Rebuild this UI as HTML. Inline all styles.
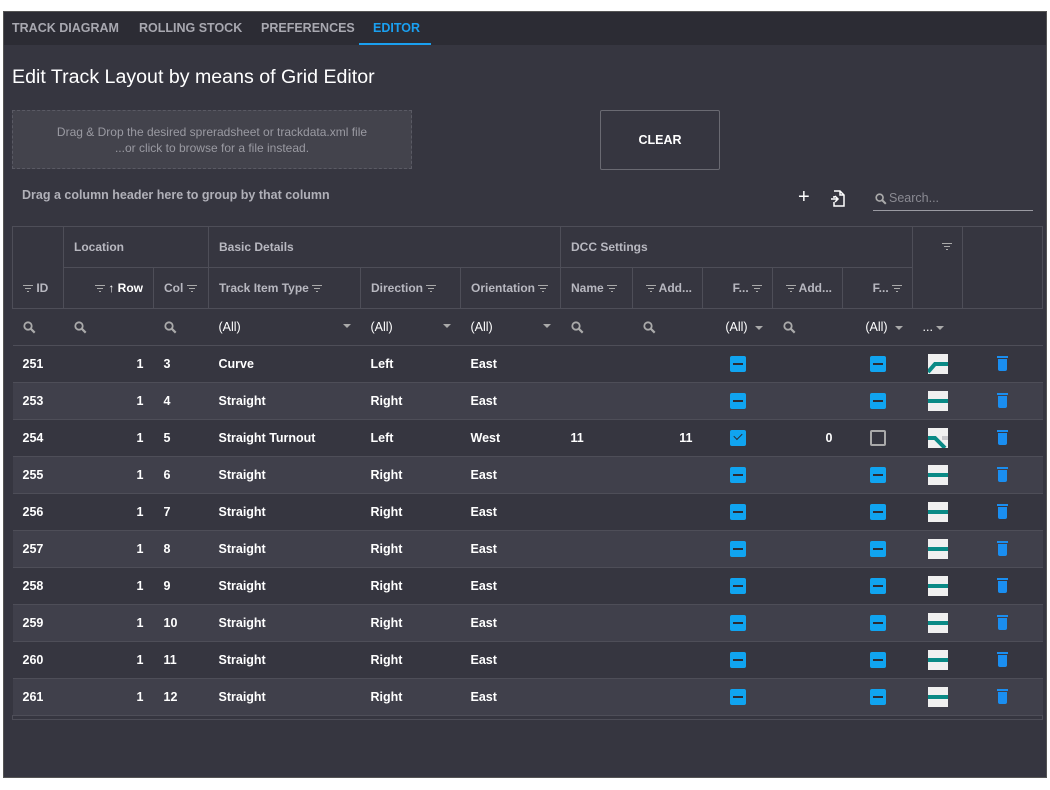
<!DOCTYPE html>
<html><head><meta charset="utf-8"><style>
*{box-sizing:border-box;margin:0;padding:0}
body{width:1050px;height:790px;background:#fff;font-family:"Liberation Sans",sans-serif;position:relative;overflow:hidden}
#app{position:absolute;left:3px;top:11px;width:1044px;height:767px;background:#363640;border:1px solid #555}
#nav{height:33px;background:#2c2c34;position:relative}
.tab{position:absolute;top:9px;font-size:12.5px;font-weight:bold;color:#a8a8b0}
.tab.act{color:#1aa0f0}
#ul{position:absolute;left:355px;top:31px;width:72px;height:2px;background:#1aa0f0}
h1{position:absolute;left:8px;top:54px;font-size:19.6px;font-weight:normal;color:#fff}
#drop{position:absolute;left:8px;top:98px;width:400px;height:59px;border:1px dashed #5a5a64;background:#43434c;color:#9a9aa2;font-size:12px;text-align:center;padding-top:13px;line-height:16px}
#clear{position:absolute;left:596px;top:98px;width:120px;height:60px;border:1px solid #6a6a72;border-radius:2px;color:#fff;font-weight:bold;font-size:12.5px;text-align:center;line-height:58px}
#grp{position:absolute;left:18px;top:176px;font-size:12.5px;font-weight:bold;color:#b0b0b8}
#srch{position:absolute;left:869px;top:176px;width:160px;height:23px;border-bottom:1px solid #9a9aa2;color:#8a8a92;font-size:12.5px;padding-left:16px;padding-top:3px}
table{position:absolute;left:8px;top:214px;border-collapse:collapse;table-layout:fixed;font-size:12.5px;color:#fff}
td,th{border:1px solid #4e4e58;padding:0 10px;white-space:nowrap;overflow:hidden;text-align:left}
th{color:#b8b8c0;font-weight:bold;font-size:12px}
.g th{height:41px}
.h th{height:41px}
.f td{height:37px;color:#fff;border-left:none;border-right:none}
.d td{height:37px;border-left:none;border-right:none;font-weight:bold}
.d.alt td{background:#40404b}
.r{text-align:right}
.c{text-align:center}
.fl{display:inline-block;width:10px;height:8px;vertical-align:middle;background:linear-gradient(#aaa,#aaa) 0 0/10px 1px no-repeat,linear-gradient(#aaa,#aaa) 2px 3px/6px 1px no-repeat,linear-gradient(#aaa,#aaa) 4px 6px/2px 1px no-repeat}
.cb{display:inline-block;width:16px;height:16px;background:#10a4f0;border-radius:2px;position:relative;vertical-align:middle}
.cb::after{content:"";position:absolute;left:3px;top:7px;width:10px;height:2px;background:#2c2c34}
.cb.chk::after{left:4px;top:3px;width:7px;height:4px;background:none;border-left:1.5px solid #2c2c34;border-bottom:1.5px solid #2c2c34;transform:rotate(-45deg)}
.cb.no{background:none;border:2px solid #aaa}.cb.no::after{display:none}
.tr{display:inline-block;width:20px;height:20px;background:#f0f0f0;vertical-align:middle;position:relative}
.st::after{content:"";position:absolute;left:0;top:8px;width:20px;height:4px;background:#0a8a86}
.dl{display:inline-block;width:9px;height:12px;background:#1a8ef0;border-radius:0 0 2px 2px;vertical-align:middle;position:relative}
.dl::before{content:"";position:absolute;left:-1px;top:-3px;width:11px;height:2px;background:#1a8ef0}
.mg{display:inline-block;width:13px;height:13px;vertical-align:middle}
.dd{display:inline-block;border:4px solid transparent;border-top-color:#aaa;vertical-align:middle;margin-top:4px;float:right}
</style></head><body>
<svg width="0" height="0" style="position:absolute"><defs><symbol id="m" viewBox="0 0 13 13"><circle cx="5" cy="5" r="3.7" fill="none" stroke="#aaa" stroke-width="1.8"/><path d="M7.7 7.7l4 4" stroke="#aaa" stroke-width="2.2"/></symbol></defs></svg>
<div id="app">
<div id="nav"><span class="tab" style="left:8px">TRACK DIAGRAM</span><span class="tab" style="left:135px">ROLLING STOCK</span><span class="tab" style="left:257px">PREFERENCES</span><span class="tab act" style="left:369px">EDITOR</span><div id="ul"></div></div>
<h1>Edit Track Layout by means of Grid Editor</h1>
<div id="drop">Drag &amp; Drop the desired spreradsheet or trackdata.xml file<br>...or click to browse for a file instead.</div>
<div id="clear">CLEAR</div>
<div id="grp">Drag a column header here to group by that column</div>
<div style="position:absolute;left:794px;top:174px;color:#fff;font-size:20px">+</div>
<svg style="position:absolute;left:826px;top:178px" width="16" height="17" viewBox="0 0 16 17"><path d="M4 1h6l4 4v11H4v-4M10 1v4h4M4 6v2M1 9h7M5 6l3 3-3 3" fill="none" stroke="#fff" stroke-width="1.5"/></svg>
<div id="srch">Search...<svg style="position:absolute;left:2px;top:5px" width="12" height="12"><use href="#m"/></svg></div>
<table>
<colgroup><col style="width:51px"><col style="width:90px"><col style="width:55px"><col style="width:152px"><col style="width:100px"><col style="width:100px"><col style="width:72px"><col style="width:70px"><col style="width:70px"><col style="width:70px"><col style="width:70px"><col style="width:50px"><col style="width:80px"></colgroup>
<tr class="g"><th rowspan="2" style="vertical-align:bottom;padding-bottom:13px"><span class="fl"></span> ID</th><th colspan="2">Location</th><th colspan="3">Basic Details</th><th colspan="5">DCC Settings</th><th rowspan="2" class="r" style="vertical-align:top;padding-top:12px"><span class="fl"></span></th><th rowspan="2"></th></tr>
<tr class="h"><th class="r"><span class="fl"></span> <span style="color:#fff">↑ Row</span></th><th>Col <span class="fl"></span></th><th>Track Item Type <span class="fl"></span></th><th>Direction <span class="fl"></span></th><th>Orientation <span class="fl"></span></th><th>Name <span class="fl"></span></th><th class="r"><span class="fl"></span> Add...</th><th class="r">F... <span class="fl"></span></th><th class="r"><span class="fl"></span> Add...</th><th class="r">F... <span class="fl"></span></th></tr>
<tr class="f"><td><svg class="mg"><use href="#m"/></svg></td><td><svg class="mg"><use href="#m"/></svg></td><td><svg class="mg"><use href="#m"/></svg></td><td>(All)<span class="dd"></span></td><td>(All)<span class="dd"></span></td><td>(All)<span class="dd"></span></td><td><svg class="mg"><use href="#m"/></svg></td><td><svg class="mg"><use href="#m"/></svg></td><td class="r">(All) &nbsp;<span class="dd" style="float:none"></span></td><td><svg class="mg"><use href="#m"/></svg></td><td class="r">(All) &nbsp;<span class="dd" style="float:none"></span></td><td>... <span class="dd" style="float:none"></span></td><td></td></tr>
<tr class="d"><td>251</td><td class="r">1</td><td>3</td><td>Curve</td><td>Left</td><td>East</td><td></td><td></td><td class="c"><span class="cb"></span></td><td></td><td class="c"><span class="cb"></span></td><td class="c"><svg class="tr" width="20" height="20"><rect width="20" height="20" fill="#f0f0f0"/><path d="M0 18l7-8h13" fill="none" stroke="#0a8a86" stroke-width="4"/></svg></td><td class="c"><span class="dl"></span></td></tr>
<tr class="d alt"><td>253</td><td class="r">1</td><td>4</td><td>Straight</td><td>Right</td><td>East</td><td></td><td></td><td class="c"><span class="cb"></span></td><td></td><td class="c"><span class="cb"></span></td><td class="c"><span class="tr st"></span></td><td class="c"><span class="dl"></span></td></tr>
<tr class="d"><td>254</td><td class="r">1</td><td>5</td><td>Straight Turnout</td><td>Left</td><td>West</td><td>11</td><td class="r">11</td><td class="c"><span class="cb chk"></span></td><td class="r">0</td><td class="c"><span class="cb no"></span></td><td class="c"><svg class="tr" width="20" height="20"><rect width="20" height="20" fill="#f0f0f0"/><path d="M14 10h6" stroke="#c8c8cc" stroke-width="4"/><path d="M0 10h7l10 10" fill="none" stroke="#0a8a86" stroke-width="4"/></svg></td><td class="c"><span class="dl"></span></td></tr>
<tr class="d alt"><td>255</td><td class="r">1</td><td>6</td><td>Straight</td><td>Right</td><td>East</td><td></td><td></td><td class="c"><span class="cb"></span></td><td></td><td class="c"><span class="cb"></span></td><td class="c"><span class="tr st"></span></td><td class="c"><span class="dl"></span></td></tr>
<tr class="d"><td>256</td><td class="r">1</td><td>7</td><td>Straight</td><td>Right</td><td>East</td><td></td><td></td><td class="c"><span class="cb"></span></td><td></td><td class="c"><span class="cb"></span></td><td class="c"><span class="tr st"></span></td><td class="c"><span class="dl"></span></td></tr>
<tr class="d alt"><td>257</td><td class="r">1</td><td>8</td><td>Straight</td><td>Right</td><td>East</td><td></td><td></td><td class="c"><span class="cb"></span></td><td></td><td class="c"><span class="cb"></span></td><td class="c"><span class="tr st"></span></td><td class="c"><span class="dl"></span></td></tr>
<tr class="d"><td>258</td><td class="r">1</td><td>9</td><td>Straight</td><td>Right</td><td>East</td><td></td><td></td><td class="c"><span class="cb"></span></td><td></td><td class="c"><span class="cb"></span></td><td class="c"><span class="tr st"></span></td><td class="c"><span class="dl"></span></td></tr>
<tr class="d alt"><td>259</td><td class="r">1</td><td>10</td><td>Straight</td><td>Right</td><td>East</td><td></td><td></td><td class="c"><span class="cb"></span></td><td></td><td class="c"><span class="cb"></span></td><td class="c"><span class="tr st"></span></td><td class="c"><span class="dl"></span></td></tr>
<tr class="d"><td>260</td><td class="r">1</td><td>11</td><td>Straight</td><td>Right</td><td>East</td><td></td><td></td><td class="c"><span class="cb"></span></td><td></td><td class="c"><span class="cb"></span></td><td class="c"><span class="tr st"></span></td><td class="c"><span class="dl"></span></td></tr>
<tr class="d alt"><td>261</td><td class="r">1</td><td>12</td><td>Straight</td><td>Right</td><td>East</td><td></td><td></td><td class="c"><span class="cb"></span></td><td></td><td class="c"><span class="cb"></span></td><td class="c"><span class="tr st"></span></td><td class="c"><span class="dl"></span></td></tr>
<tr><td colspan="13" style="height:4px;padding:0"></td></tr>
</table>
</div>
</body></html>
